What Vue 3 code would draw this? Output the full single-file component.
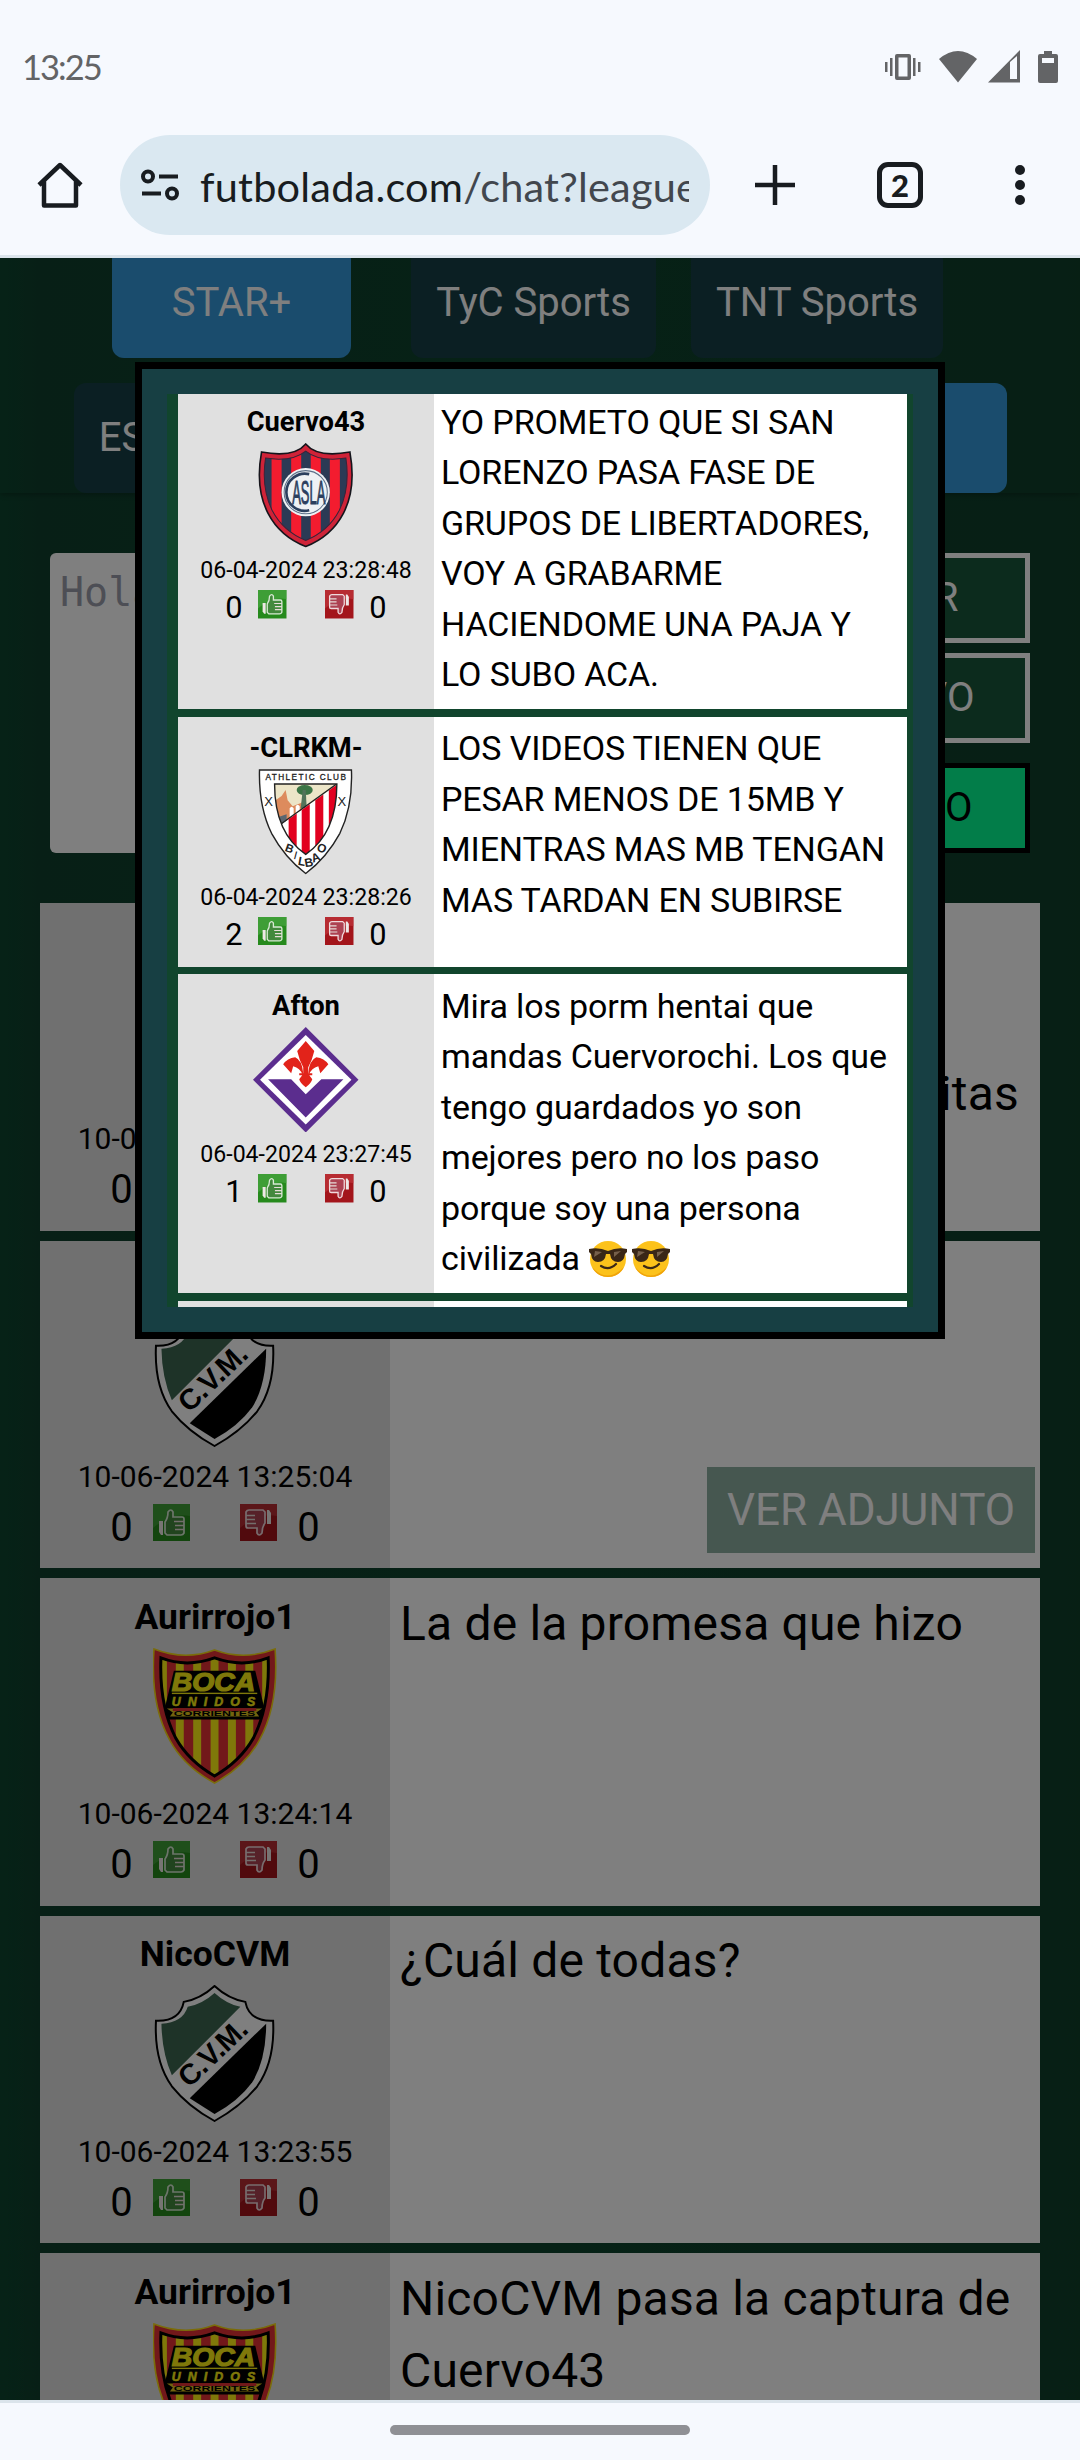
<script setup>
import { h } from 'vue'

const messages = [
  { user: 'NicoCVM', badge: 'cvm', date: '10-06-2024 13:25:31', tail: 'bonitas' },
  { user: 'NicoCVM', badge: 'cvm', date: '10-06-2024 13:25:04', attachment: true },
  { user: 'Aurirrojo1', badge: 'boca', date: '10-06-2024 13:24:14', text: 'La de la promesa que hizo' },
  { user: 'NicoCVM', badge: 'cvm', date: '10-06-2024 13:23:55', text: '¿Cuál de todas?' },
  { user: 'Aurirrojo1', badge: 'boca', date: '10-06-2024 13:23:30', text: 'NicoCVM pasa la captura de Cuervo43' },
]

const captured = [
  {
    user: 'Cuervo43', badge: 'casla', date: '06-04-2024 23:28:48', up: 0, size: 'first',
    lines: ['YO PROMETO QUE SI SAN', 'LORENZO PASA FASE DE', 'GRUPOS DE LIBERTADORES,', 'VOY A GRABARME', 'HACIENDOME UNA PAJA Y', 'LO SUBO ACA.'],
  },
  {
    user: '-CLRKM-', badge: 'athletic', date: '06-04-2024 23:28:26', up: 2, size: 'second',
    lines: ['LOS VIDEOS TIENEN QUE', 'PESAR MENOS DE 15MB Y', 'MIENTRAS MAS MB TENGAN', 'MAS TARDAN EN SUBIRSE'],
  },
  {
    user: 'Afton', badge: 'viola', date: '06-04-2024 23:27:45', up: 1, size: 'third', emojis: 2,
    lines: ['Mira los porm hentai que', 'mandas Cuervorochi. Los que', 'tengo guardados yo son', 'mejores pero no los paso', 'porque soy una persona', 'civilizada'],
  },
]

const p = (d, fill, extra = {}) => h('path', { d, fill, ...extra })
const r = (x, y, width, height, fill) => h('rect', { x, y, width, height, fill })
const t = (x, y, size, fill, text, extra = {}) =>
  h('text', { x, y, 'font-size': size, fill, 'text-anchor': 'middle', 'font-family': 'Liberation Sans, Arial, sans-serif', ...extra }, text)
const clip = (id, d) => h('clipPath', { id }, [h('path', { d })])

const cvmOuter = 'M60 1Q74 14 91 17Q95 37 119 36Q121 77 103 102Q87 122 60 137Q33 122 17 102Q-1 77 1 36Q25 37 29 17Q46 14 60 1Z'
const bocaShape = 'M1 1Q32 13 62 2Q92 13 123 1Q127 57 107 93Q93 119 62 136Q31 119 17 93Q-3 57 1 1Z'
const bocaInner = 'M8 10Q34 20 62 10Q90 20 116 10Q118 58 101 91Q88 114 62 129Q36 114 23 91Q6 58 8 10Z'
const caslaShape = 'M47.5 1Q59 15 91.500 9Q98 45 85 70Q73 93 47.5 103Q22 93 10 70Q-3 45 3.500 9Q36 15 47.5 1Z'
const caslaInner = 'M47.5 8Q61 19 87.500 15Q92 44 81 67Q70 88 47.5 97Q25 88 14 67Q3 44 7.500 15Q34 19 47.5 8Z'
const athInner = 'M16 15H78Q78 64 47 85Q16 64 16 15Z'

const Badge = ({ kind }) => {
  if (kind === 'cvm') {
    return h('svg', { class: 'badge', viewBox: '-2 0 124 138' }, [
      p(cvmOuter, '#fff', { stroke: '#000', 'stroke-width': 2 }),
      p('M60 8Q72 19 86 22L17 91Q7 68 6.500 39Q28 38 33 22Q48 19 60 8Z', '#3c6650'),
      p('M112 39L35 114L60 130Q84 117 98 98Q112 75 112 39Z', '#000'),
      h('g', { transform: 'translate(36 103) rotate(-43.5)' }, [
        t(0, 0, 29, '#000', 'C.V.M.', { 'text-anchor': 'start', 'font-weight': 700, textLength: 84, transform: 'translate(-2 0)' }),
      ]),
    ])
  }
  if (kind === 'boca') {
    return h('svg', { class: 'badge', viewBox: '0 0 124 138' }, [
      clip('boca-clip', bocaInner),
      p(bocaShape, '#e53035', { stroke: '#f5d914', 'stroke-width': 1.6 }),
      h('g', { 'clip-path': 'url(#boca-clip)' }, [
        r(0, 0, 124, 138, '#e53035'),
        ...[6, 23, 40.5, 58, 75.5, 93, 110].map((x) => r(x, 0, 8, 138, '#fff114')),
        p('M21 23H103L112 60V72H12V60Z', '#000'),
      ]),
      p(bocaInner, 'none', { stroke: '#000', 'stroke-width': 3 }),
      t(61, 43, 26, '#fff114', 'BOCA', { 'font-weight': 700, 'font-style': 'italic', textLength: 84, lengthAdjust: 'spacingAndGlyphs', stroke: '#fff114', 'stroke-width': 1.2 }),
      r(19, 45, 86, 1.4, '#fff114'),
      t(61, 58, 12.5, '#fff114', 'UNIDOS', { 'font-weight': 700, 'font-style': 'italic', textLength: 84, stroke: '#fff114', 'stroke-width': 0.5 }),
      p('M14 61H110L104 65L107 69H17L20 65Z', '#e5c81c'),
      r(20, 60.5, 84, 3, '#e53035'),
      t(62, 68.5, 8, '#000', 'CORRIENTES', { 'font-weight': 700, textLength: 82, lengthAdjust: 'spacingAndGlyphs' }),
    ])
  }
  if (kind === 'casla') {
    return h('svg', { class: 'badge', viewBox: '0 0 95 105' }, [
      clip('casla-clip', caslaInner),
      p(caslaShape, '#cf2338', { stroke: '#15151c', 'stroke-width': 1.6 }),
      h('g', { 'clip-path': 'url(#casla-clip)' }, [
        r(0, 0, 95, 105, '#2b3a55'),
        ...[13.500, 33, 52.500, 71.500].map((x) => r(x, 0, 10, 105, '#f31c2f')),
      ]),
      p(caslaInner, 'none', { stroke: '#3a2439', 'stroke-width': 1 }),
      h('circle', { cx: 47.5, cy: 49, r: 24, fill: '#eef1f4' }),
      h('circle', { cx: 47.5, cy: 49, r: 21.5, fill: 'none', stroke: '#5d7089', 'stroke-width': 1 }),
      p('M51 31A18.500 18.500 0 1 0 51 67', 'none', { stroke: '#2b3f5e', 'stroke-width': 2.6 }),
      h('g', { transform: 'translate(50.500 61) scale(0.620 1)' }, [
        t(0, 0, 33, '#2b3f5e', 'ASLA', { textLength: 53, lengthAdjust: 'spacingAndGlyphs', stroke: '#2b3f5e', 'stroke-width': 1 }),
      ]),
    ])
  }
  if (kind === 'athletic') {
    return h('svg', { class: 'badge', viewBox: '-0.500 0 95 105' }, [
      clip('ath-clip', athInner),
      p('M1 1H92.500Q94 37 81 64Q68 88 47 104Q26 88 13 64Q0 37 1 1Z', '#fff', { stroke: '#222', 'stroke-width': 1.4 }),
      h('g', { 'clip-path': 'url(#ath-clip)' }, [
        r(0, 0, 95, 105, '#ece5c8'),
        p('M17 31L23 27L27 21L29 31L34 37L44 33L44 50L17 52Z', '#dd8b5d'),
        p('M16 49L28 45V57H18Z', '#5c6670'),
        p('M31 39q2-3 4 0v9h-4zM37 37q2-3 4 0v9h-4z', '#fff'),
        h('ellipse', { cx: 46, cy: 21, rx: 8, ry: 5, fill: '#3b7546' }),
        p('M44 21h3l1 18h-6z', '#52745a'),
        p('M79 15L23 55V90H79Z', '#fff'),
        ...[30, 43, 56.500, 70].map((x) => h('path', { d: `M${x} ${15 + (79 - x) * 0.714}L${x + 8} ${15 + (71 - x) * 0.714}V90H${x}Z`, fill: '#e2001f' })),
        p('M78 14H0V70L22 55L79 14Z', 'none', { stroke: '#222', 'stroke-width': 1.3 }),
      ]),
      p(athInner, 'none', { stroke: '#222', 'stroke-width': 1.4 }),
      t(47, 11, 8.200, '#222', 'ATHLETIC CLUB', { textLength: 80, stroke: '#222', 'stroke-width': 0.3 }),
      t(10, 36.500, 13, '#222', 'X'),
      t(83, 36.500, 13, '#222', 'X'),
      t(31, 83, 11.5, '#222', 'B', { transform: 'rotate(20 31 79)', 'font-weight': 700 }),
      t(37, 90, 11.5, '#222', 'I', { transform: 'rotate(15 37 86)' }),
      t(43, 96, 12, '#222', 'L', { transform: 'rotate(10 43 92)', 'font-weight': 700 }),
      t(50, 97, 12, '#222', 'B', { transform: 'rotate(-10 50 93)', 'font-weight': 700 }),
      t(57, 92, 12, '#222', 'A', { transform: 'rotate(-20 57 88)', 'font-weight': 700 }),
      t(63, 83, 12, '#222', 'O', { transform: 'rotate(20 63 79)', 'font-weight': 700 }),
    ])
  }
  return h('svg', { class: 'badge', viewBox: '0 0 105 105' }, [
    p('M52.500 0L105 52.500L52.500 105L0 52.500Z', '#5b2d8e'),
    p('M52.500 8L98 52.500L52.500 97L7 52.500Z', '#fff'),
    p('M15 52H38L52.500 67L68 52H90L52.500 90Z', '#5b2d8e'),
    p('M52.500 14L61 24Q59 33 55 40V46H59V48H56L59 52Q58 56 52.500 60Q47 56 46 52L49 48H46V46H50V40Q46 33 44 24Z', '#e2231a'),
    p('M50 46Q49 33 42 30Q34 31 30 37L38 46L40 39Q47 41 49 47ZM55 46Q56 33 63 30Q71 31 75 37L67 46L65 39Q58 41 56 47Z', '#e2231a'),
  ])
}

const Thumb = ({ flip }) =>
  h('svg', { class: 'thumb', viewBox: '0 0 37 37' }, [
    r(0, 0, 37, 37, flip ? '#a3151b' : '#268a1d'),
    p('M0 0H37V12Q18 8 0 24Z', flip ? '#c43c43' : '#4fac47', { opacity: 0.6 }),
    h('g', { transform: flip ? 'rotate(180 18.500 18.500)' : undefined }, [
      p('M12 18Q15 14 15 8Q18 4 20 8V13H29Q31 13 31 15V29Q30 31 28 31H14L12 29Z', flip ? '#ad4252' : '#43893d', { stroke: flip ? '#f0d9dc' : '#d9ead5', 'stroke-width': 1.7 }),
      p('M6 17H10V31H8L6 28Z', '#eee8e6'),
      p('M21 17.500H31M22 21.500H31M22 25.500H31', 'none', { stroke: '#e6dcd8', 'stroke-width': 1.5 }),
    ]),
  ])
</script>

<template>
  <div class="screen">
    <header class="chrome">
      <div class="status">
        <span class="clock">13:25</span>
        <svg class="status-icons" viewBox="0 0 174 34">
          <g fill="#636466">
            <path d="M0 12h2.500v10H0zM5 8h2.500v18H5zM28 8h2.500v18H28zM33 12h2.500v10H33z" />
            <path d="M12 4h12q2 0 2 2v22q0 2-2 2H12q-2 0-2-2V6q0-2 2-2zM13.500 7.500v19h9v-19z" fill-rule="evenodd" />
            <path d="M54 9Q73-7 92 9L73 32.500Z" />
            <path d="M103 32.500L135 0V32.500ZM125 12V29H132V6Z" fill-rule="evenodd" />
            <path d="M159 1h8v3h4q2 0 2 2v25q0 2-2 2h-16q-2 0-2-2V6q0-2 2-2h4zM157 8v5h12V8z" fill-rule="evenodd" />
          </g>
        </svg>
      </div>
      <div class="toolbar">
        <svg class="home" viewBox="0 0 46 46" fill="none" stroke="#181c20" stroke-width="4.500">
          <path d="M2 23L23 3L44 23M7 19V43.500H39V19" stroke-linejoin="round" />
        </svg>
        <div class="omnibox">
          <svg class="tune" viewBox="0 0 38 32" fill="none" stroke="#181c20" stroke-width="4">
            <circle cx="7" cy="7.500" r="5" />
            <circle cx="31" cy="24.500" r="5" />
            <path d="M18 7.500H37M1 24.500H20" />
          </svg>
          <div class="url"><span class="host">futbolada.com</span>/chat?league</div>
        </div>
        <svg class="plus" viewBox="0 0 40 40" stroke="#181c20" stroke-width="4.500">
          <path d="M20 0V40M0 20H40" />
        </svg>
        <div class="tabcount">2</div>
        <svg class="dots" viewBox="0 0 10 40" fill="#181c20">
          <circle cx="5" cy="5" r="5" />
          <circle cx="5" cy="20" r="5" />
          <circle cx="5" cy="35" r="5" />
        </svg>
      </div>
    </header>

    <main class="page">
      <div class="channels">
        <div class="channel-row">
          <span class="channel active star">STAR+</span>
          <span class="channel tyc">TyC Sports</span>
          <span class="channel tnt">TNT Sports</span>
        </div>
        <div class="channel-row second">
          <span class="channel espn">ESPN</span>
          <span class="channel active last"></span>
        </div>
      </div>

      <section class="compose">
        <div class="field">Hola</div>
        <div class="actions">
          <span class="action">ENVIAR</span>
          <span class="action file">ARCHIVO</span>
          <span class="action primary">VIVO</span>
        </div>
      </section>

      <section class="feed">
        <article v-for="(m, i) in messages" :key="i" class="message">
          <div class="author">
            <div class="name">{{ m.user }}</div>
            <Badge :kind="m.badge" />
            <div class="date">{{ m.date }}</div>
            <div class="votes"><span>0</span><Thumb /><Thumb :flip="true" class="down" /><span>0</span></div>
          </div>
          <div class="body">
            <p v-if="m.text">{{ m.text }}</p>
            <p v-if="m.tail" class="tail">{{ m.tail }}</p>
            <span v-if="m.attachment" class="attachment">VER ADJUNTO</span>
          </div>
        </article>
      </section>

      <div class="overlay"></div>

      <div class="modal">
        <div class="capture">
          <article v-for="m in captured" :key="m.user" class="message" :class="m.size">
            <div class="author">
              <div class="name">{{ m.user }}</div>
              <Badge :kind="m.badge" />
              <div class="date">{{ m.date }}</div>
              <div class="votes"><span>{{ m.up }}</span><Thumb /><Thumb :flip="true" class="down" /><span>0</span></div>
            </div>
            <div class="body">
              <div v-for="(line, n) in m.lines" :key="n" class="line">
                {{ line }}
                <span v-if="m.emojis && n === m.lines.length - 1" class="emojis">
                  <svg v-for="e in m.emojis" :key="e" class="emoji" viewBox="0 0 38 38">
                    <circle cx="19" cy="19" r="18" fill="#fcc21b" />
                    <path d="M3 27Q18 44 35 27Q30 37 19 37Q8 37 3 27Z" fill="#f0a30a" />
                    <path d="M0 9Q10 7 19 11Q28 7 38 9V12L36 14Q35 22 29 22Q22 22 21 14H17Q16 22 9 22Q3 22 2 14L0 12Z" fill="#3a2717" />
                    <path d="M6 11l7 1-8 5zM25 12l7-1-7 6z" fill="#76604b" />
                    <path d="M12 26Q20 31 27 24" fill="none" stroke="#3a2717" stroke-width="2.200" stroke-linecap="round" />
                  </svg>
                </span>
              </div>
            </div>
          </article>
          <article class="message fourth"><div class="author"></div><div class="body"></div></article>
        </div>
      </div>
    </main>

    <footer class="gesture"><span class="pill"></span></footer>
  </div>
</template>

<style>
body {
  margin: 0;
}
</style>

<style scoped>
.screen {
  width: 1080px;
  height: 2460px;
  display: flex;
  flex-direction: column;
  overflow: hidden;
  background: #f6f9fe;
  font-family: Roboto, sans-serif;
  color: #000;
}
.chrome {
  height: 255px;
  flex: none;
  border-bottom: 3px solid #dbe4eb;
}
.status {
  height: 135px;
  box-sizing: border-box;
  padding: 50px 21px 0 22px;
  display: flex;
  justify-content: space-between;
  align-items: flex-start;
}
.clock {
  font: 400 34.500px/34px Lato, sans-serif;
  letter-spacing: -2px;
  color: #636466;
}
.status-icons {
  width: 174px;
  height: 34px;
}
.toolbar {
  height: 100px;
  display: flex;
  align-items: center;
  padding-left: 37px;
}
.home {
  width: 46px;
  height: 46px;
}
.omnibox {
  box-sizing: border-box;
  margin-left: 37px;
  width: 590px;
  height: 100px;
  border-radius: 50px;
  background: #dae8f1;
  padding: 0 20px 0 21px;
  display: flex;
  align-items: center;
}
.tune {
  width: 38px;
  height: 32px;
  flex: none;
}
.url {
  margin-left: 21px;
  width: 489px;
  overflow: hidden;
  white-space: nowrap;
  font: 41.500px/56px Lato, sans-serif;
  letter-spacing: 0.200px;
  color: #42474e;
  padding-top: 2px;
}
.host {
  color: #181c20;
}
.plus {
  width: 40px;
  height: 40px;
  margin-left: 45px;
}
.tabcount {
  box-sizing: border-box;
  width: 46px;
  height: 46px;
  margin-left: 82px;
  border: 5px solid #181c20;
  border-radius: 11px;
  font: 900 31px/36px Lato, sans-serif;
  text-align: center;
  color: #181c20;
}
.dots {
  width: 10px;
  height: 40px;
  margin-left: 92px;
}
.page {
  position: relative;
  height: 2142px;
  flex: none;
  overflow: hidden;
  background: linear-gradient(90deg, #0c452e 0, #0f3f2d 38px, #0d432c 50%, #0f3e2b 1050px, #0f3f29 100%);
}
.channels {
  display: flow-root;
  height: 235px;
  box-shadow: 0 2px 5px rgba(0, 0, 0, 0.25);
}
.channel-row {
  display: flex;
  height: 110px;
  margin-top: -10px;
  padding-left: 112px;
}
.channel-row.second {
  margin-top: 25px;
  padding: 0 73px 0 74px;
  justify-content: space-between;
}
.channel {
  box-sizing: border-box;
  height: 110px;
  border-radius: 12px;
  background: #163f46;
  color: #fff;
  font-size: 40px;
  line-height: 110px;
  text-align: center;
}
.channel.active {
  background: #3498db;
}
.star {
  width: 239px;
}
.tyc {
  width: 245px;
  margin-left: 60px;
}
.tnt {
  width: 252px;
  margin-left: 35px;
}
.espn {
  width: 150px;
}
.last {
  width: 240px;
}
.compose {
  display: flex;
  justify-content: space-between;
  margin: 60px 50px 50px;
}
.field {
  box-sizing: border-box;
  width: 688px;
  height: 300px;
  border-radius: 6px;
  background: #fff;
  color: #9a9daa;
  padding: 15px 10px;
  font: 40px/48px 'DejaVu Sans Mono', monospace;
}
.actions {
  width: 282px;
}
.action {
  box-sizing: border-box;
  display: block;
  height: 90px;
  margin-bottom: 10px;
  border: 5px solid #fff;
  background: #18563b;
  color: #fff;
  font-size: 40px;
  line-height: 80px;
  text-align: center;
}
.action.file {
  padding-left: 2px;
}
.action.primary {
  margin: 20px 0 0;
  padding-right: 51px;
  border-color: #000;
  background: #04fa92;
  color: #000;
  text-align: right;
  word-spacing: 4px;
  letter-spacing: 1.500px;
}
.feed {
  display: flex;
  flex-direction: column;
  gap: 10px;
  margin: 0 40px;
}
.message {
  --u: 1px;
  flex: none;
  height: 327.500px;
  display: flex;
  background: #fff;
}
.author {
  box-sizing: border-box;
  flex: none;
  width: 350px;
  padding-top: calc(17.500 * var(--u));
  background: #e0e0e0;
  display: flex;
  flex-direction: column;
  align-items: center;
}
.name {
  font-size: calc(35.500 * var(--u));
  line-height: calc(42 * var(--u));
  font-weight: 700;
}
.badge {
  height: calc(137 * var(--u));
  margin-top: calc(10 * var(--u));
  flex: none;
}
.date {
  margin-top: calc(11.500 * var(--u));
  font-size: calc(30 * var(--u));
  line-height: calc(36 * var(--u));
  white-space: nowrap;
}
.votes {
  margin-top: calc(9 * var(--u));
  display: flex;
  font-size: calc(40 * var(--u));
  line-height: calc(40 * var(--u));
}
.votes span {
  margin-top: calc(4 * var(--u));
}
.thumb {
  width: calc(37 * var(--u));
  height: calc(37 * var(--u));
  margin-left: calc(20.500 * var(--u));
}
.thumb.down {
  margin: 0 calc(20 * var(--u)) 0 calc(50 * var(--u));
}
.body {
  flex: 1;
  display: flex;
  flex-direction: column;
  align-items: flex-start;
  padding: 9.500px 5px 15px 10px;
  min-width: 0;
}
.body p {
  margin: 0;
  font-size: 48px;
  line-height: 72px;
  letter-spacing: 0.180px;
}
.body .tail {
  align-self: flex-end;
  margin: 145px 16px 0 0;
}
.attachment {
  box-sizing: border-box;
  width: 328px;
  height: 86px;
  margin: auto 0 0 auto;
  background: #8caea0;
  color: #fff;
  font-size: 44px;
  line-height: 86px;
  text-align: center;
}
.overlay {
  position: absolute;
  inset: 0;
  background: rgba(0, 0, 0, 0.5);
}
.modal {
  position: absolute;
  left: 135px;
  top: 104px;
  box-sizing: border-box;
  width: 810px;
  height: 977px;
  padding: 25px;
  border: 7px solid #000;
  background: #173f43;
}
.capture {
  box-sizing: border-box;
  width: 746px;
  height: 913px;
  padding: 0 6px 0 11px;
  overflow: hidden;
  display: flex;
  flex-direction: column;
  gap: 7.500px;
  background: #11452d;
}
.capture .message {
  --u: 0.77px;
}
.capture .first {
  height: 319px;
  margin-top: -4px;
}
.capture .second {
  height: 250px;
}
.capture .third {
  height: 319px;
}
.capture .fourth {
  height: 40px;
}
.capture .author {
  width: 256px;
  padding-top: 15.500px;
}
.capture .badge {
  margin-top: 5px;
}
.capture .votes {
  margin-top: 5.500px;
}
.capture .body {
  padding: 6.500px 0 0 7px;
}
.line {
  display: flex;
  align-items: center;
  height: 50.600px;
  font-size: 34px;
  letter-spacing: -0.140px;
  line-height: 50.600px;
  white-space: nowrap;
}
.emojis {
  display: flex;
  gap: 5px;
  margin-left: 9px;
}
.emoji {
  width: 38px;
  height: 38px;
}
.gesture {
  box-sizing: border-box;
  height: 60px;
  border-top: 3px solid #dbe4eb;
  display: flex;
  justify-content: center;
  padding-top: 22px;
}
.pill {
  width: 300px;
  height: 10px;
  border-radius: 5px;
  background: #8f9095;
}
</style>
